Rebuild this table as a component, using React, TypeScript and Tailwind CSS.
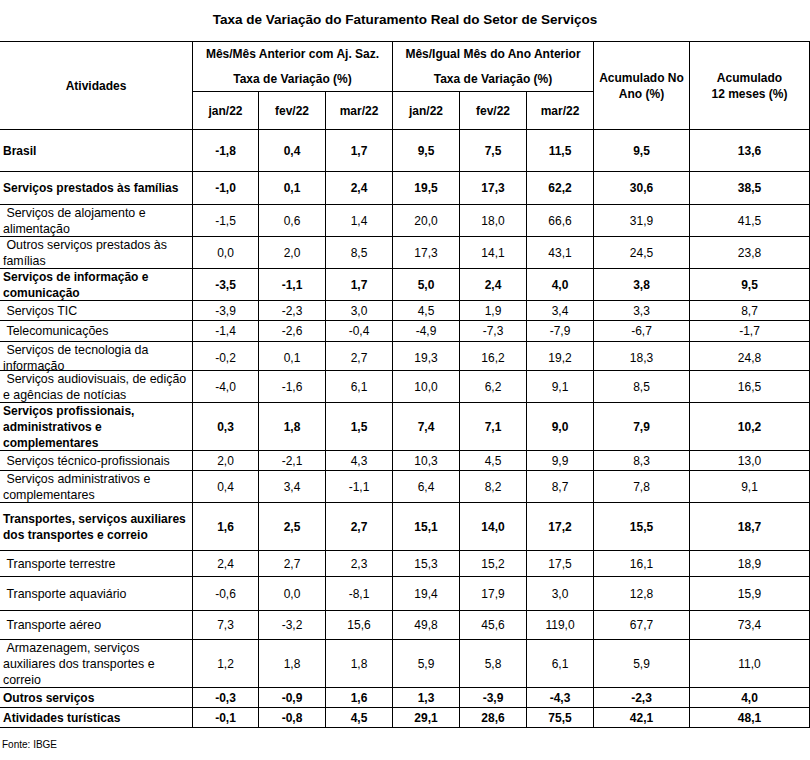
type Row = {
  label: string[];
  bold?: boolean;
  indent?: boolean;
  h: string;
  values: string[];
};

const cols = 'grid grid-cols-[192px_66px_67px_67px_67px_67px_67px_96px_121px]';

const rows: Row[] = [
  { label: ['Brasil'], bold: true, h: 'h-[42px]', values: ['-1,8', '0,4', '1,7', '9,5', '7,5', '11,5', '9,5', '13,6'] },
  { label: ['Serviços prestados às famílias'], bold: true, h: 'h-[33px]', values: ['-1,0', '0,1', '2,4', '19,5', '17,3', '62,2', '30,6', '38,5'] },
  { label: ['Serviços de alojamento e', 'alimentação'], indent: true, h: 'h-[32px]', values: ['-1,5', '0,6', '1,4', '20,0', '18,0', '66,6', '31,9', '41,5'] },
  { label: ['Outros serviços prestados às', 'famílias'], indent: true, h: 'h-[32px]', values: ['0,0', '2,0', '8,5', '17,3', '14,1', '43,1', '24,5', '23,8'] },
  { label: ['Serviços de informação e', 'comunicação'], bold: true, h: 'h-[32px]', values: ['-3,5', '-1,1', '1,7', '5,0', '2,4', '4,0', '3,8', '9,5'] },
  { label: ['Serviços TIC'], indent: true, h: 'h-[20px]', values: ['-3,9', '-2,3', '3,0', '4,5', '1,9', '3,4', '3,3', '8,7'] },
  { label: ['Telecomunicações'], indent: true, h: 'h-[21px]', values: ['-1,4', '-2,6', '-0,4', '-4,9', '-7,3', '-7,9', '-6,7', '-1,7'] },
  { label: ['Serviços de tecnologia da', 'informação'], indent: true, h: 'h-[29px]', values: ['-0,2', '0,1', '2,7', '19,3', '16,2', '19,2', '18,3', '24,8'] },
  { label: ['Serviços audiovisuais, de edição', 'e agências de notícias'], indent: true, h: 'h-[32px]', values: ['-4,0', '-1,6', '6,1', '10,0', '6,2', '9,1', '8,5', '16,5'] },
  { label: ['Serviços profissionais,', 'administrativos e', 'complementares'], bold: true, h: 'h-[48px]', values: ['0,3', '1,8', '1,5', '7,4', '7,1', '9,0', '7,9', '10,2'] },
  { label: ['Serviços técnico-profissionais'], indent: true, h: 'h-[20px]', values: ['2,0', '-2,1', '4,3', '10,3', '4,5', '9,9', '8,3', '13,0'] },
  { label: ['Serviços administrativos e', 'complementares'], indent: true, h: 'h-[32px]', values: ['0,4', '3,4', '-1,1', '6,4', '8,2', '8,7', '7,8', '9,1'] },
  { label: ['Transportes, serviços auxiliares', 'dos transportes e correio'], bold: true, h: 'h-[48px]', values: ['1,6', '2,5', '2,7', '15,1', '14,0', '17,2', '15,5', '18,7'] },
  { label: ['Transporte terrestre'], indent: true, h: 'h-[26px]', values: ['2,4', '2,7', '2,3', '15,3', '15,2', '17,5', '16,1', '18,9'] },
  { label: ['Transporte aquaviário'], indent: true, h: 'h-[34px]', values: ['-0,6', '0,0', '-8,1', '19,4', '17,9', '3,0', '12,8', '15,9'] },
  { label: ['Transporte aéreo'], indent: true, h: 'h-[29px]', values: ['7,3', '-3,2', '15,6', '49,8', '45,6', '119,0', '67,7', '73,4'] },
  { label: ['Armazenagem, serviços', 'auxiliares dos transportes e', 'correio'], indent: true, h: 'h-[48px]', values: ['1,2', '1,8', '1,8', '5,9', '5,8', '6,1', '5,9', '11,0'] },
  { label: ['Outros serviços'], bold: true, h: 'h-[20px]', values: ['-0,3', '-0,9', '1,6', '1,3', '-3,9', '-4,3', '-2,3', '4,0'] },
  { label: ['Atividades turísticas'], bold: true, h: 'h-[20px]', values: ['-0,1', '-0,8', '4,5', '29,1', '28,6', '75,5', '42,1', '48,1'] },
];

const months = ['jan/22', 'fev/22', 'mar/22', 'jan/22', 'fev/22', 'mar/22'];

export default function App() {
  return (
    <div className="w-[810px] h-[760px] bg-white text-black font-['Liberation_Sans',Arial,sans-serif]">
      {/* Title */}
      <div className="h-[41px] flex items-center justify-center text-[13.5px] font-bold">
        Taxa de Variação do Faturamento Real do Setor de Serviços
      </div>

      <div className="border-t border-b border-black text-[12px] leading-[16px]">
        {/* Header */}
        <div className={`${cols} grid-rows-[49px_38px] font-bold`}>
          <div className="row-span-2 flex items-center justify-center">Atividades</div>
          {['Mês/Mês Anterior com Aj. Saz.', 'Mês/Igual Mês do Ano Anterior'].map(t => (
            <div key={t} className="col-span-3 border-l border-black flex flex-col">
              <div className="h-[24px] flex items-center justify-center whitespace-nowrap">{t}</div>
              <div className="h-[25px] flex items-center justify-center">Taxa de Variação (%)</div>
            </div>
          ))}
          <div className="row-span-2 border-l border-black flex flex-col items-center justify-center text-center">
            <span>Acumulado No</span>
            <span>Ano (%)</span>
          </div>
          <div className="row-span-2 border-l border-r border-black flex flex-col items-center justify-center text-center">
            <span>Acumulado</span>
            <span>12 meses (%)</span>
          </div>
          {months.map((m, i) => (
            <div
              key={i}
              className="row-start-2 border-l border-t border-black flex items-center justify-center"
              style={{ gridColumnStart: i + 2 }}
            >
              {m}
            </div>
          ))}
        </div>

        {/* Rows */}
        {rows.map((r, ri) => (
          <div key={ri} className={`${cols} ${r.h} border-t border-black ${r.bold ? 'font-bold' : ''}`}>
            <div className={`pl-[3px] flex flex-col justify-center ${r.bold ? '' : 'text-[12.4px]'}`}>
              {r.label.map((l, li) => (
                <span key={li} className="whitespace-nowrap">
                  {r.indent && li === 0 ? '\u00a0' + l : l}
                </span>
              ))}
            </div>
            {r.values.map((v, vi) => (
              <div
                key={vi}
                className={`border-l border-black flex items-center justify-center ${vi === 7 ? 'border-r' : ''}`}
              >
                {v}
              </div>
            ))}
          </div>
        ))}
      </div>

      {/* Footer */}
      <div className="h-[32px] flex items-center pl-[2px] text-[10px]">Fonte: IBGE</div>
    </div>
  );
}
